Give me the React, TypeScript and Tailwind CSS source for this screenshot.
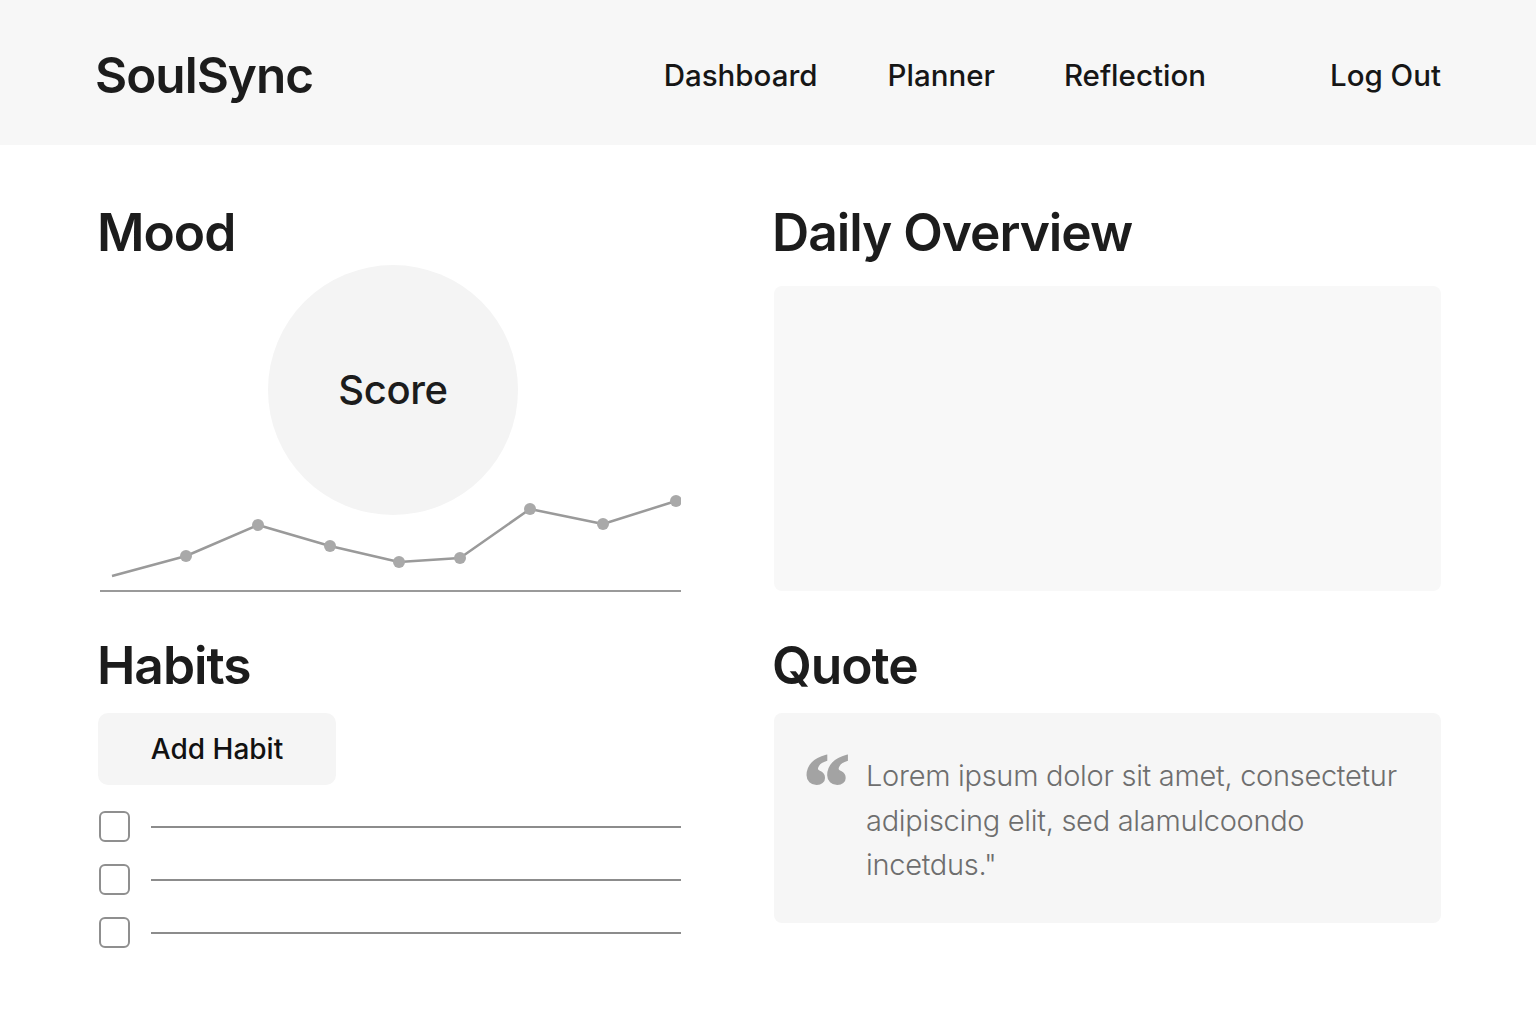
import React from "react";

const moodPoints: [number, number][] = [
  [88, 61],
  [160, 30],
  [232, 51],
  [301, 67],
  [362, 63],
  [432, 14],
  [505, 29],
  [578, 6],
];

function MoodChart() {
  const line = [[14, 81] as [number, number], ...moodPoints].map(([x, y]) => `${x},${y}`).join(" ");
  return (
    <svg width="583" height="98" viewBox="0 0 583 98" className="relative -mt-[20px] block">
      <polyline points={line} fill="none" stroke="#9a9a9a" strokeWidth="2.5" strokeLinejoin="round" />
      {moodPoints.map(([x, y], i) => (
        <circle key={i} cx={x} cy={y} r="6" fill="#a9a9a9" />
      ))}
      <line x1="2" y1="96" x2="583" y2="96" stroke="#9a9a9a" strokeWidth="2" />
    </svg>
  );
}

function HabitRow() {
  return (
    <div className="flex items-center gap-[21px] pl-px">
      <div className="h-[31px] w-[31px] shrink-0 rounded-[6px] border-2 border-[#8f8f8f]" />
      <div className="h-[2px] flex-1 bg-[#8c8c8c]" />
    </div>
  );
}

export default function App() {
  return (
    <div className="min-h-screen bg-white font-['Inter',sans-serif] text-[#1c1c1c]">
      <header className="flex h-[145px] items-center bg-[#f7f7f7] pl-[95px] pr-[95px] pt-[7px]">
        <div className="text-[49.5px] font-semibold leading-none tracking-[-0.02em]">SoulSync</div>
        <nav className="ml-auto flex items-center text-[29.5px] font-medium leading-none text-[#161616]">
          <a className="mr-[70px]">Dashboard</a>
          <a className="mr-[69px]">Planner</a>
          <a className="mr-[124px]">Reflection</a>
          <a>Log Out</a>
        </nav>
      </header>

      <main className="grid grid-cols-[583px_667px] gap-x-[93px] gap-y-[47px] pl-[98px] pt-[62px]">
        <section className="flex flex-col">
          <h2 className="-ml-px text-[51.5px] font-semibold leading-none tracking-[-0.02em]">Mood</h2>
          <div className="ml-[170px] mt-[6px] flex h-[250px] w-[250px] items-center justify-center rounded-full bg-[#f4f4f4]">
            <span className="text-[40px] font-medium tracking-[-0.01em]">Score</span>
          </div>
          <MoodChart />
        </section>

        <section className="flex flex-col">
          <h2 className="-ml-[2px] text-[51.5px] font-semibold leading-none tracking-[-0.02em]">Daily Overview</h2>
          <div className="mt-[27px] h-[305px] rounded-[8px] bg-[#f8f8f8]" />
        </section>

        <section className="flex flex-col">
          <h2 className="-ml-px text-[51.5px] font-semibold leading-none tracking-[-0.02em]">Habits</h2>
          <button className="mt-[22px] flex h-[72px] w-[238px] items-center justify-center rounded-[10px] bg-[#f5f5f5] text-[28px] font-medium text-[#111]">
            Add Habit
          </button>
          <div className="mt-[26px] flex flex-col gap-[22px]">
            <HabitRow />
            <HabitRow />
            <HabitRow />
          </div>
        </section>

        <section className="flex flex-col">
          <h2 className="-ml-[2px] text-[51.5px] font-semibold leading-none tracking-[-0.02em]">Quote</h2>
          <div className="mt-[22px] flex h-[210px] rounded-[8px] bg-[#f6f6f6] pl-[29px] pt-[31px]">
            <span className="h-[50px] w-[63px] shrink-0 font-['Liberation_Serif',serif] text-[94px] font-bold leading-[0.9] text-[#a3a3a3] [-webkit-text-stroke:2px_#a3a3a3]">
              “
            </span>
            <p className="w-[550px] pt-[10px] text-[29px] font-light leading-[44.5px] tracking-[-0.01em] text-[#6e6e6e]">
              Lorem ipsum dolor sit amet, consectetur adipiscing elit, sed alamulcoondo incetdus."
            </p>
          </div>
        </section>
      </main>
    </div>
  );
}
